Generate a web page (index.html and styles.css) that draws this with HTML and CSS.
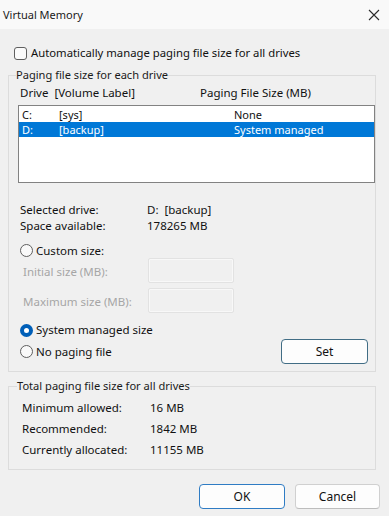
FILE: index.html
```html
<!DOCTYPE html>
<html>
<head>
<meta charset="utf-8">
<link rel="stylesheet" href="styles.css">
</head>
<body>
<div class="dialog">
  <div class="titlebar">
    <span class="title">Virtual Memory</span>
    <svg class="close" width="12" height="12" viewBox="0 0 12 12"><path d="M1 1 L11 11 M11 1 L1 11" stroke="#2b2b2b" stroke-width="1.1" fill="none"/></svg>
  </div>

  <label class="check-row"><span class="checkbox"></span><span class="check-text">Automatically manage paging file size for all drives</span></label>

  <fieldset class="group group-drives">
    <legend>Paging file size for each drive</legend>
    <div class="list-header"><span class="hcol1">Drive&nbsp;&nbsp;[Volume Label]</span><span>Paging File Size (MB)</span></div>
    <div class="listbox">
      <div class="lrow"><span class="c1">C:</span><span class="c2">[sys]</span><span>None</span></div>
      <div class="lrow selected"><span class="c1">D:</span><span class="c2">[backup]</span><span>System managed</span></div>
    </div>

    <div class="info first"><span class="info-label">Selected drive:</span><span>D:&nbsp;&nbsp;[backup]</span></div>
    <div class="info"><span class="info-label">Space available:</span><span>178265 MB</span></div>

    <div class="radio-row custom"><span class="radio"></span><span>Custom size:</span></div>
    <div class="size-row"><span class="size-label">Initial size (MB):</span><span class="size-box"></span></div>
    <div class="size-row second"><span class="size-label">Maximum size (MB):</span><span class="size-box"></span></div>

    <div class="radio-row sysman"><span class="radio checked"></span><span>System managed size</span></div>
    <div class="nopage-row">
      <div class="radio-row"><span class="radio"></span><span>No paging file</span></div>
      <button class="btn btn-set">Set</button>
    </div>
  </fieldset>

  <fieldset class="group group-total">
    <legend>Total paging file size for all drives</legend>
    <div class="trow"><span class="tlabel">Minimum allowed:</span><span>16 MB</span></div>
    <div class="trow"><span class="tlabel">Recommended:</span><span>1842 MB</span></div>
    <div class="trow"><span class="tlabel">Currently allocated:</span><span>11155 MB</span></div>
  </fieldset>

  <div class="buttons">
    <button class="btn btn-ok">OK</button>
    <button class="btn btn-cancel">Cancel</button>
  </div>
</div>
</body>
</html>
```

FILE: styles.css
```css
* { box-sizing: border-box; }
html, body { margin: 0; padding: 0; }
body {
  width: 389px;
  height: 516px;
  background: #f0f0f0;
  font-family: "Noto Sans", "Open Sans", sans-serif;
  font-size: 11.5px;
  color: #111;
  overflow: hidden;
}
.dialog { width: 389px; height: 516px; display: flex; flex-direction: column; }

.titlebar {
  height: 29px;
  background: #f9f9f9;
  display: flex;
  align-items: center;
  justify-content: space-between;
  padding: 0 9px 0 3px;
}
.title { font-size: 11px; line-height: 16px; color: #1a1a1a; }
.close { display: block; }

.check-row {
  margin: 16px 0 0 14px;
  height: 16px;
  display: flex;
  align-items: center;
  gap: 4px;
  line-height: 16px;
}
.check-text { font-size: 11.3px; }
.checkbox {
  width: 13px; height: 13px;
  border: 1px solid #5f5f5f;
  border-radius: 3px;
  background: #fbfbfb;
  flex: none;
}

.group {
  margin: 6px 13px 0 8px;
  padding: 0;
  border: 1px solid #dcdcdc;
  min-width: 0;
}
.group legend {
  margin-left: 7px;
  padding: 0;
  line-height: 16px;
  font-size: 11.1px;
  color: #1a1a1a;
}

.list-header {
  margin: 2px 0 0 11px;
  display: flex;
  line-height: 16px;
}
.hcol1 { width: 180px; }

.listbox {
  margin: 4px 0 0 9px;
  width: 357px;
  height: 78px;
  border: 1px solid #828282;
  background: #fff;
  padding-top: 1px;
  font-size: 11px;
}
.lrow {
  height: 15px;
  line-height: 15px;
  display: flex;
  padding-left: 3px;
}
.lrow .c1 { width: 37px; }
.lrow .c2 { width: 175px; }
.lrow.selected { background: #0078d7; color: #fff; }

.info { display: flex; margin-left: 11px; line-height: 16px; }
.info.first { margin-top: 19px; }
.info-label { width: 127px; }

.radio-row {
  display: flex;
  align-items: center;
  gap: 3px;
  line-height: 16px;
}
.radio-row.custom { margin: 9px 0 0 11px; height: 15px; }
.radio-row.sysman { margin: 9px 0 0 11px; height: 16px; }
.radio {
  width: 13px; height: 13px;
  border-radius: 50%;
  border: 1px solid #5f5f5f;
  background: #f9f9f9;
  flex: none;
}
.radio.checked {
  border: 4px solid #005fb8;
  background: #fff;
}

.size-row {
  display: flex;
  align-items: center;
  height: 25px;
  margin-left: 14px;
  color: #a6a6a6;
}
.size-row.second { margin-top: 5px; }
.size-label { width: 125px; padding-top: 2px; }
.size-box {
  width: 86px; height: 25px;
  border: 1px solid #e2e2e2;
  box-shadow: inset 0 0 0 1px #f8f8f8;
  border-radius: 2px;
}

.nopage-row {
  margin: 1px 7px 7px 11px;
  height: 25px;
  display: flex;
  align-items: center;
  justify-content: space-between;
}

.btn {
  font-family: inherit;
  font-size: 12px;
  color: #111;
  height: 25px;
  padding: 0;
  background: #fdfdfd;
  border: 1px solid #d0d0d0;
  border-bottom-color: #bdbdbd;
  border-radius: 4px;
  line-height: 16px;
}
.btn-set { width: 87px; border: 1px solid #416d85; }
.btn-ok { width: 86px; border: 1px solid #2f7cc4; }
.btn-cancel { width: 85px; }

.group-total legend { margin-left: 8px; }
.group-total { padding: 3px 0 9px 0; }
.trow { display: flex; height: 21px; line-height: 21px; margin-left: 13px; }
.tlabel { width: 128px; }

.buttons {
  margin: 14px 9px 0 0;
  display: flex;
  justify-content: flex-end;
  gap: 10px;
}
```
